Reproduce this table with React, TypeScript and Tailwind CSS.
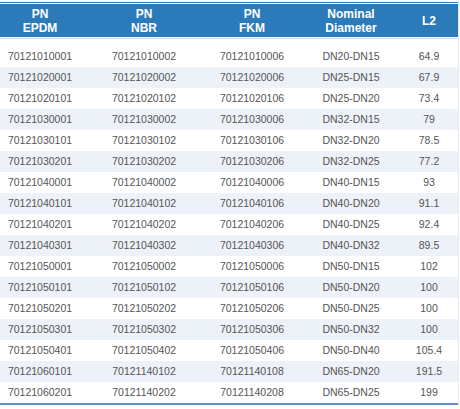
import React from "react";

const rows: [string, string, string, string, string][] = [
  ["70121010001", "70121010002", "70121010006", "DN20-DN15", "64.9"],
  ["70121020001", "70121020002", "70121020006", "DN25-DN15", "67.9"],
  ["70121020101", "70121020102", "70121020106", "DN25-DN20", "73.4"],
  ["70121030001", "70121030002", "70121030006", "DN32-DN15", "79"],
  ["70121030101", "70121030102", "70121030106", "DN32-DN20", "78.5"],
  ["70121030201", "70121030202", "70121030206", "DN32-DN25", "77.2"],
  ["70121040001", "70121040002", "70121040006", "DN40-DN15", "93"],
  ["70121040101", "70121040102", "70121040106", "DN40-DN20", "91.1"],
  ["70121040201", "70121040202", "70121040206", "DN40-DN25", "92.4"],
  ["70121040301", "70121040302", "70121040306", "DN40-DN32", "89.5"],
  ["70121050001", "70121050002", "70121050006", "DN50-DN15", "102"],
  ["70121050101", "70121050102", "70121050106", "DN50-DN20", "100"],
  ["70121050201", "70121050202", "70121050206", "DN50-DN25", "100"],
  ["70121050301", "70121050302", "70121050306", "DN50-DN32", "100"],
  ["70121050401", "70121050402", "70121050406", "DN50-DN40", "105.4"],
  ["70121060101", "70121140102", "70121140108", "DN65-DN20", "191.5"],
  ["70121060201", "70121140202", "70121140208", "DN65-DN25", "199"],
];

const headers: [string, string][] = [
  ["PN", "EPDM"],
  ["PN", "NBR"],
  ["PN", "FKM"],
  ["Nominal", "Diameter"],
  ["L2", ""],
];

const widths = ["w-[80px]", "w-[128px]", "w-[88px]", "w-[110px]", "w-[52px] pr-[6px]"];

export default function App() {
  return (
    <div
      className="w-[460px] h-[409px] bg-white"
      style={{ fontFamily: '"Liberation Sans", Arial, sans-serif' }}
    >
      <div className="w-[459px] pt-[2px] border-r border-[#e6eaee]">
        <div className="h-px bg-[#2b7bbb]" />
        <div className="h-px bg-white" />
        <div className="flex h-[33px] bg-[#2b7bbb] text-white font-bold text-[12px] leading-[14px]">
          {headers.map((h, i) => (
            <div
              key={i}
              className={`${widths[i]} flex flex-col items-center justify-center`}
            >
              <span>{h[0]}</span>
              {h[1] && <span>{h[1]}</span>}
            </div>
          ))}
        </div>
        <div className="h-px bg-white" />
        <div className="h-px bg-[#cfdcea]" />
        <div className="h-[7px]" />
        <div className="text-[10.5px] text-[#555555]">
          {rows.map((r, ri) => (
            <div
              key={ri}
              className={`flex h-[21px] items-center ${
                ri % 2 === 1 ? "bg-[#edf1f8]" : "bg-white"
              }`}
            >
              {r.map((c, ci) => (
                <div key={ci} className={`${widths[ci]} text-center`}>
                  {c}
                </div>
              ))}
            </div>
          ))}
        </div>
        <div className="h-[2px] bg-[#5b91c8]" />
      </div>
    </div>
  );
}
